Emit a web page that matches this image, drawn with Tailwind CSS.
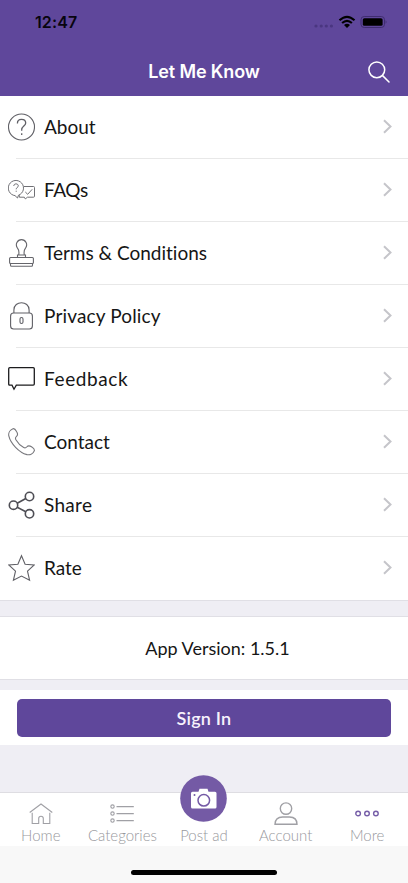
<!DOCTYPE html>
<html lang="en">
<head>
<meta charset="utf-8">
<title>Let Me Know</title>
<script src="https://cdn.jsdelivr.net/npm/@tailwindcss/browser@4"></script>
</head>
<body class="w-[408px] h-[883px] overflow-hidden bg-[#efeef4] font-['Lato',sans-serif] text-[#161616] [font-variant-ligatures:none]">
<div class="flex h-[883px] flex-col">
  <header class="h-24 shrink-0 bg-[#5f479b]">
    <div class="flex h-11 items-center justify-between pl-[35px] pr-[21px]">
      <span class="font-['Inter',sans-serif] text-[16px] leading-5 font-semibold tracking-[0.1px] text-[#08050f]">12:47</span>
      <svg class="h-5 w-[74px]" viewBox="313 12 74 20">
        <g fill="#4a3680"><circle cx="316" cy="26" r="1.6"/><circle cx="321.200" cy="26" r="1.600"/><circle cx="326.300" cy="26" r="1.600"/><circle cx="331.400" cy="26" r="1.600"/></g>
        <g fill="none" stroke="#000" stroke-width="2.100"><path d="M339.500 20.300Q347 13.300 354.500 20.300"/><path d="M342.100 23.100Q347 18.600 351.900 23.100"/></g>
        <path d="M344 24.900Q347 22.400 350 24.900L347 27.900Z"/>
        <rect x="361" y="16.500" width="23.500" height="11" rx="3.200" fill="none" stroke="#3f2d70"/>
        <rect x="362.800" y="18.200" width="19.800" height="7.600" rx="1.600"/><path d="M385.600 20.300Q387.400 22 385.600 23.800Z" fill="#3f2d70"/>
      </svg>
    </div>
    <div class="grid h-[52px] grid-cols-[1fr_auto_1fr] items-center pb-0 pt-1">
      <h1 class="col-start-2 font-['Inter',sans-serif] text-[18px] leading-6 font-semibold tracking-[-0.15px] text-white">Let Me Know</h1>
      <svg class="mr-[18px] h-[22px] w-[22px] justify-self-end" viewBox="0 0 22 22" fill="none" stroke="#fff" stroke-width="1.500" stroke-linecap="round"><circle cx="8.800" cy="8.800" r="7.900"/><path d="M14.600 14.600L21 21"/></svg>
    </div>
  </header>

  <main class="flex grow flex-col">
    <ul class="flex flex-col border-b border-[#e0dfe5] bg-white text-[19px] leading-6">
      <li class="flex h-[63px] items-center gap-[9px] bg-[linear-gradient(#e8e8e8,#e8e8e8)] bg-[length:100%_1px] bg-[position:16px_62px] bg-no-repeat pb-px pl-2 pr-4">
        <svg class="h-7 w-[27px]" viewBox="0 0 27 28" fill="none" stroke="#606066" stroke-width="1.100"><circle cx="13.500" cy="14" r="13"/><path d="M9.400 10.400C9.400 7.800 11 6.400 13.500 6.400C16 6.400 17.700 8 17.700 10.100C17.700 12.900 13.700 13.400 13.700 16.700V17.800M13.700 20.300V21.900" stroke-width="1.300"/></svg>
        <span class="tracking-[0px]">About</span>
        <svg class="ml-auto h-4 w-[9px]" viewBox="0 0 9 16" fill="none" stroke="#c5c5ca" stroke-width="2"><path d="M1 1.200L7.500 7.500L1 13.800"/></svg>
      </li>
      <li class="flex h-[63px] items-center gap-[9px] bg-[linear-gradient(#e8e8e8,#e8e8e8)] bg-[length:100%_1px] bg-[position:16px_62px] bg-no-repeat pb-px pl-2 pr-4">
        <svg class="h-7 w-[27px]" viewBox="0 0 27 28" fill="none" stroke="#707075" stroke-width="1"><path d="M10.500 19.200L9.500 22L7 19.600A7.600 7.600 0 1 1 10.500 19.200Z"/><path d="M5.800 10C5.800 8.600 6.700 7.900 8 7.900C9.400 7.900 10.300 8.700 10.300 9.900C10.300 11.300 8.200 11.500 8.200 13.300M8.200 14.700V15.800"/><path d="M15.800 10.500H25.500Q26.500 10.500 26.500 11.500V20.200Q26.500 21.200 25.500 21.200H19.500L17.300 22.900L16.300 21.200H11.300V19.200M17.300 16L19.700 18.300L24.200 13.300"/></svg>
        <span class="tracking-[-0.4px]">FAQs</span>
        <svg class="ml-auto h-4 w-[9px]" viewBox="0 0 9 16" fill="none" stroke="#c5c5ca" stroke-width="2"><path d="M1 1.200L7.500 7.500L1 13.800"/></svg>
      </li>
      <li class="flex h-[63px] items-center gap-[9px] bg-[linear-gradient(#e8e8e8,#e8e8e8)] bg-[length:100%_1px] bg-[position:16px_62px] bg-no-repeat pb-px pl-2 pr-4">
        <svg class="h-7 w-[27px]" viewBox="0 0 27 28" fill="none" stroke="#65656b" stroke-width="1.100"><path d="M10.700 15.800C11.300 12.700 11.200 11.200 9.500 9.100C6.800 5.500 9.300 .600 13.500 .600C17.700 .600 20.200 5.500 17.500 9.100C15.800 11.200 15.700 12.700 16.300 15.800M9.500 18.500V16H17.500V18.500"/><rect x="1.600" y="18.500" width="23.800" height="6" rx="1"/><path d="M2.500 24.500V26.200Q2.500 27.200 3.500 27.200H23.500Q24.500 27.200 24.500 26.200V24.500"/></svg>
        <span class="tracking-[0px]">Terms &amp; Conditions</span>
        <svg class="ml-auto h-4 w-[9px]" viewBox="0 0 9 16" fill="none" stroke="#c5c5ca" stroke-width="2"><path d="M1 1.200L7.500 7.500L1 13.800"/></svg>
      </li>
      <li class="flex h-[63px] items-center gap-[9px] bg-[linear-gradient(#e8e8e8,#e8e8e8)] bg-[length:100%_1px] bg-[position:16px_62px] bg-no-repeat pb-px pl-2 pr-4">
        <svg class="h-7 w-[27px]" viewBox="0 0 27 28" fill="none" stroke="#606066" stroke-width="1.100"><rect x="2.600" y="11" width="21.800" height="16" rx="3"/><path d="M5.900 11V8C5.900 -1.700 21.100 -1.700 21.100 8V11"/><rect x="12" y="15.500" width="3" height="6" rx="1.500"/></svg>
        <span class="tracking-[0.15px]">Privacy Policy</span>
        <svg class="ml-auto h-4 w-[9px]" viewBox="0 0 9 16" fill="none" stroke="#c5c5ca" stroke-width="2"><path d="M1 1.200L7.500 7.500L1 13.800"/></svg>
      </li>
      <li class="flex h-[63px] items-center gap-[9px] bg-[linear-gradient(#e8e8e8,#e8e8e8)] bg-[length:100%_1px] bg-[position:16px_62px] bg-no-repeat pb-px pl-2 pr-4">
        <svg class="h-7 w-[27px]" viewBox="0 0 27 28" fill="none" stroke="#1c1c1e" stroke-width="1.300"><path d="M1.800 2.700H25.200Q26.300 2.700 26.300 3.800V19.100Q26.300 20.200 25.200 20.200H8.300L6 24.200L4 20.200H1.800Q.700 20.200 .700 19.100V3.800Q.700 2.700 1.800 2.700Z"/></svg>
        <span class="tracking-[0.6px]">Feedback</span>
        <svg class="ml-auto h-4 w-[9px]" viewBox="0 0 9 16" fill="none" stroke="#c5c5ca" stroke-width="2"><path d="M1 1.200L7.500 7.500L1 13.800"/></svg>
      </li>
      <li class="flex h-[63px] items-center gap-[9px] bg-[linear-gradient(#e8e8e8,#e8e8e8)] bg-[length:100%_1px] bg-[position:16px_62px] bg-no-repeat pb-px pl-2 pr-4">
        <svg class="h-7 w-[27px]" viewBox="0 0 27 28" fill="none" stroke="#77777c" stroke-width="1.100"><path d="M5 .700C6.200 .400 7.300 1.200 8.700 3.700C10.200 6.200 10 7.300 8.300 8.600C7.300 9.400 7.200 10.300 7.900 11.700C9.800 15 12.300 17.700 15.700 19.500C17 20.200 17.800 20 18.700 19C20 17.500 21.200 17.400 23.500 18.800C26 20.400 26.900 21.300 26.300 22.700C25.200 25.400 22.200 27.400 19 26.600C11 24.400 2.600 15.500 .800 7.800C.200 4.800 2.200 1.800 5 .700Z"/></svg>
        <span class="tracking-[0px]">Contact</span>
        <svg class="ml-auto h-4 w-[9px]" viewBox="0 0 9 16" fill="none" stroke="#c5c5ca" stroke-width="2"><path d="M1 1.200L7.500 7.500L1 13.800"/></svg>
      </li>
      <li class="flex h-[63px] items-center gap-[9px] bg-[linear-gradient(#e8e8e8,#e8e8e8)] bg-[length:100%_1px] bg-[position:16px_62px] bg-no-repeat pb-px pl-2 pr-4">
        <svg class="h-7 w-[27px]" viewBox="0 0 27 28" fill="none" stroke="#4e4e55" stroke-width="1.600"><circle cx="5.500" cy="14.200" r="4.200"/><circle cx="21.500" cy="5.500" r="4.200"/><circle cx="21.500" cy="22.800" r="4.200"/><path d="M9.200 12.200L17.800 7.500M9.200 16.200L17.800 20.800"/></svg>
        <span class="tracking-[0.3px]">Share</span>
        <svg class="ml-auto h-4 w-[9px]" viewBox="0 0 9 16" fill="none" stroke="#c5c5ca" stroke-width="2"><path d="M1 1.200L7.500 7.500L1 13.800"/></svg>
      </li>
      <li class="flex h-[63px] items-center gap-[9px] pb-px pl-2 pr-4">
        <svg class="h-7 w-[27px]" viewBox="0 0 27 28" fill="none" stroke="#606066" stroke-width="1.100"><path d="M13.500 1.700L17.100 10.200L26.200 11L19.500 17.200L21.600 26.300L13.500 22L5.400 26.300L7.500 17.200L.800 11L9.900 10.200Z"/></svg>
        <span class="tracking-[0px]">Rate</span>
        <svg class="ml-auto h-4 w-[9px]" viewBox="0 0 9 16" fill="none" stroke="#c5c5ca" stroke-width="2"><path d="M1 1.200L7.500 7.500L1 13.800"/></svg>
      </li>
    </ul>

    <section class="mt-[15px] flex h-16 items-center justify-center border-y border-[#e0dfe5] bg-white pl-[27px] text-[18px] leading-6">App Version: 1.5.1</section>

    <section class="mt-[10px] h-[55px] bg-white px-[17px] pt-[9px]">
      <button class="flex h-[38px] w-full items-center justify-center rounded-[5px] bg-[#5f479b] text-[18px] font-semibold tracking-[0.2px] text-[#f7f2fc]">Sign In</button>
    </section>
  </main>

  <nav class="grid h-[54px] shrink-0 grid-cols-5 border-t border-[#dedde2] bg-white text-[15px] leading-[18px] font-light text-[#98989d]">
    <a class="flex flex-col items-center pt-[9px]">
      <svg class="h-6 w-6" viewBox="0 0 24 24" fill="none" stroke="#a0a0a5" stroke-width="1.100"><path d="M.700 10.500L12 2L23.300 10.500M3.200 10.700V21.500H9.700V16.500Q9.700 14.200 12 14.200Q14.300 14.200 14.300 16.500V21.500H20.800V10.700"/></svg>
      <span>Home</span>
    </a>
    <a class="flex flex-col items-center pt-[9px]">
      <svg class="h-6 w-6" viewBox="0 0 24 24" fill="none" stroke="#a0a0a5" stroke-width="1.100"><circle cx="2.500" cy="4.600" r="1.700"/><circle cx="2.500" cy="11.600" r="1.700"/><circle cx="2.500" cy="18.600" r="1.700"/><path d="M6.500 4.600H23.800M6.500 11.600H23.800M6.500 18.600H23.800"/></svg>
      <span>Categories</span>
    </a>
    <a class="relative flex flex-col items-center pt-[33px]">
      <svg class="absolute -top-[18px] h-[47px] w-[47px]" viewBox="0 0 47 47"><circle cx="23.500" cy="23.500" r="23.300" fill="#745aa5"/><path d="M12 16.700H18.500L19.500 13.800H27.500L28.500 16.700H35Q36.500 16.700 36.500 18.200V32Q36.500 33.500 35 33.500H12.500Q11 33.500 11 32V18.200Q11 16.700 12.500 16.700Z" fill="#fff"/><circle cx="23.800" cy="25.300" r="5.800" fill="#fff" stroke="#745aa5" stroke-width="1.500"/><circle cx="14.500" cy="20" r="1" fill="#745aa5"/></svg>
      <span>Post ad</span>
    </a>
    <a class="flex flex-col items-center pt-[9px]">
      <svg class="h-6 w-6" viewBox="0 0 24 24" fill="none" stroke="#a0a0a5" stroke-width="1.400"><circle cx="12" cy="6.600" r="5.700"/><path d="M1 22.300C1 17.500 4 15 8.500 15H15.500C20 15 23 17.500 23 22.300Z"/></svg>
      <span>Account</span>
    </a>
    <a class="flex flex-col items-center pt-[9px]">
      <svg class="h-6 w-6" viewBox="0 0 24 24" fill="none" stroke="#765ea8" stroke-width="1.400"><circle cx="3.100" cy="11.500" r="2.300"/><circle cx="12" cy="11.500" r="2.300"/><circle cx="20.900" cy="11.500" r="2.300"/></svg>
      <span>More</span>
    </a>
  </nav>
  <footer class="flex h-[37px] shrink-0 justify-center bg-[#f8f8f8] pt-6"><div class="h-[5px] w-[146px] rounded-full bg-black"></div></footer>
</div>
</body>
</html>
